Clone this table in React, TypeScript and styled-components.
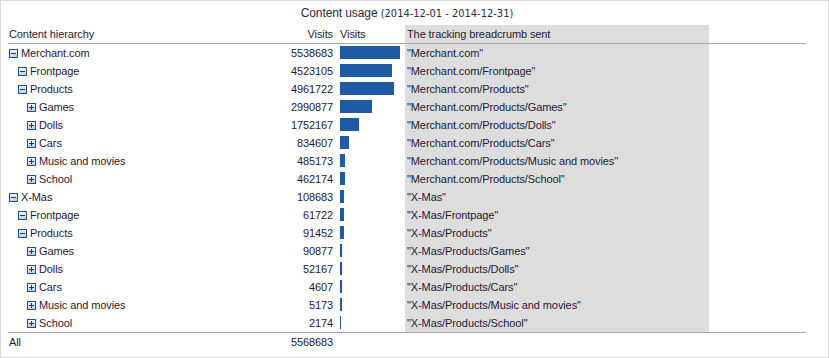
import type { FC } from 'react'
import styled, { createGlobalStyle } from 'styled-components'

interface Row {
  label: string
  level: number
  open: boolean
  visits: number
  bar: number
  crumb: string
}

const rows: Row[] = [
  { label: 'Merchant.com', level: 0, open: true, visits: 5538683, bar: 60, crumb: '"Merchant.com"' },
  { label: 'Frontpage', level: 1, open: true, visits: 4523105, bar: 52, crumb: '"Merchant.com/Frontpage"' },
  { label: 'Products', level: 1, open: true, visits: 4961722, bar: 54, crumb: '"Merchant.com/Products"' },
  { label: 'Games', level: 2, open: false, visits: 2990877, bar: 32, crumb: '"Merchant.com/Products/Games"' },
  { label: 'Dolls', level: 2, open: false, visits: 1752167, bar: 19, crumb: '"Merchant.com/Products/Dolls"' },
  { label: 'Cars', level: 2, open: false, visits: 834607, bar: 9, crumb: '"Merchant.com/Products/Cars"' },
  { label: 'Music and movies', level: 2, open: false, visits: 485173, bar: 5, crumb: '"Merchant.com/Products/Music and movies"' },
  { label: 'School', level: 2, open: false, visits: 462174, bar: 5, crumb: '"Merchant.com/Products/School"' },
  { label: 'X-Mas', level: 0, open: true, visits: 108683, bar: 4, crumb: '"X-Mas"' },
  { label: 'Frontpage', level: 1, open: true, visits: 61722, bar: 4, crumb: '"X-Mas/Frontpage"' },
  { label: 'Products', level: 1, open: true, visits: 91452, bar: 4, crumb: '"X-Mas/Products"' },
  { label: 'Games', level: 2, open: false, visits: 90877, bar: 2, crumb: '"X-Mas/Products/Games"' },
  { label: 'Dolls', level: 2, open: false, visits: 52167, bar: 2, crumb: '"X-Mas/Products/Dolls"' },
  { label: 'Cars', level: 2, open: false, visits: 4607, bar: 2, crumb: '"X-Mas/Products/Cars"' },
  { label: 'Music and movies', level: 2, open: false, visits: 5173, bar: 2, crumb: '"X-Mas/Products/Music and movies"' },
  { label: 'School', level: 2, open: false, visits: 2174, bar: 1, crumb: '"X-Mas/Products/School"' },
]

const GlobalStyle = createGlobalStyle`
  html, body {
    margin: 0;
    padding: 0;
    background: #ffffff;
  }
  body {
    font-family: "Liberation Sans", Arial, sans-serif;
    font-size: 11px;
    letter-spacing: -0.1px;
    color: #1f1a33;
  }
`

// small expand/collapse box, bluish like the old tree widgets
const ToggleIcon: FC<{ open: boolean }> = ({ open }) => (
  <svg width="9" height="9" viewBox="0 0 9 9">
    <defs>
      <linearGradient id="tgFill" x1="0" y1="0" x2="0" y2="1">
        <stop offset="0" stopColor="#f4f8fd" />
        <stop offset="1" stopColor="#b7cde8" />
      </linearGradient>
    </defs>
    <rect x="0.5" y="0.5" width="8" height="8" fill="url(#tgFill)" stroke="#24507f" />
    <rect x="2" y="4" width="5" height="1" fill="#163a66" />
    {!open && <rect x="4" y="2" width="1" height="5" fill="#163a66" />}
  </svg>
)

const App: FC = () => (
  <>
    <GlobalStyle />
    <Panel>
      <Title>
        Content usage <DateRange>(2014-12-01 - 2014-12-31)</DateRange>
      </Title>
      <Table>
        <colgroup>
          <col style={{ width: 260 }} />
          <col style={{ width: 69 }} />
          <col style={{ width: 68 }} />
          <col style={{ width: 304 }} />
          <col />
        </colgroup>
        <thead>
          <tr>
            <HeadCell>Content hierarchy</HeadCell>
            <HeadCell $align="right">Visits</HeadCell>
            <HeadCell $pad={3}>Visits</HeadCell>
            <HeadCell $shaded>The tracking breadcrumb sent</HeadCell>
            <HeadCell />
          </tr>
        </thead>
        <tbody>
          {rows.map((row, i) => (
            <tr key={i}>
              <NameCell $level={row.level}>
                <Toggle>
                  <ToggleIcon open={row.open} />
                </Toggle>
                {row.label}
              </NameCell>
              <NumCell>{row.visits}</NumCell>
              <BarCell>
                <Bar style={{ width: row.bar }} />
              </BarCell>
              <CrumbCell>{row.crumb}</CrumbCell>
              <Cell />
            </tr>
          ))}
        </tbody>
        <tfoot>
          <tr>
            <FootCell>All</FootCell>
            <FootCell $align="right">5568683</FootCell>
            <FootCell />
            <FootCell />
            <FootCell />
          </tr>
        </tfoot>
      </Table>
    </Panel>
  </>
)

const Panel = styled.div`
  box-sizing: border-box;
  width: 829px;
  height: 358px;
  border: 1px solid #d9d9d9;
`

const Title = styled.div`
  width: 798px;
  margin-left: 7px;
  height: 24px;
  line-height: 24px;
  text-align: center;
  font-size: 12px;
  color: #2e2b3d;
`

const DateRange = styled.span`
  font-family: "DejaVu Sans Condensed", "DejaVu Sans", sans-serif;
  font-size: 11px;
  letter-spacing: 0;
`

const Table = styled.table`
  margin-left: 7px;
  width: 798px;
  border-collapse: collapse;
  table-layout: fixed;
`

const Cell = styled.td`
  height: 18px;
  padding: 0;
  white-space: nowrap;
  line-height: 18px;
`

const HeadCell = styled.th<{ $align?: 'left' | 'right'; $shaded?: boolean; $pad?: number }>`
  height: 18px;
  padding: 0 ${({ $align }) => ($align === 'right' ? '4px' : '0')} 0 ${({ $shaded, $pad }) => ($shaded ? 2 : $pad ?? 1)}px;
  font-weight: normal;
  text-align: ${({ $align }) => $align ?? 'left'};
  white-space: nowrap;
  line-height: 18px;
  background: ${({ $shaded }) => ($shaded ? '#dddddd' : 'transparent')};
  border-bottom: 1px solid #a6a6a6;
`

const NameCell = styled(Cell)<{ $level: number }>`
  padding-left: ${({ $level }) => 1 + $level * 9}px;
`

const Toggle = styled.span`
  display: inline-block;
  width: 9px;
  height: 9px;
  margin-right: 3px;
  vertical-align: -1px;

  svg {
    display: block;
  }
`

const NumCell = styled(Cell)`
  text-align: right;
  padding-right: 4px;
`

const BarCell = styled(Cell)`
  padding-left: 3px;
  vertical-align: top;
`

const Bar = styled.div`
  height: 13px;
  margin-top: 2px;
  background: #1f5aa5;
`

const CrumbCell = styled(Cell)`
  padding-left: 2px;
  background: #dddddd;
`

const FootCell = styled.td<{ $align?: 'left' | 'right' }>`
  height: 18px;
  padding: 0 ${({ $align }) => ($align === 'right' ? '4px' : '0')} 0 ${({ $align }) => ($align === 'right' ? '0' : '1px')};
  text-align: ${({ $align }) => $align ?? 'left'};
  line-height: 18px;
  border-top: 1px solid #a6a6a6;
`

export default App
